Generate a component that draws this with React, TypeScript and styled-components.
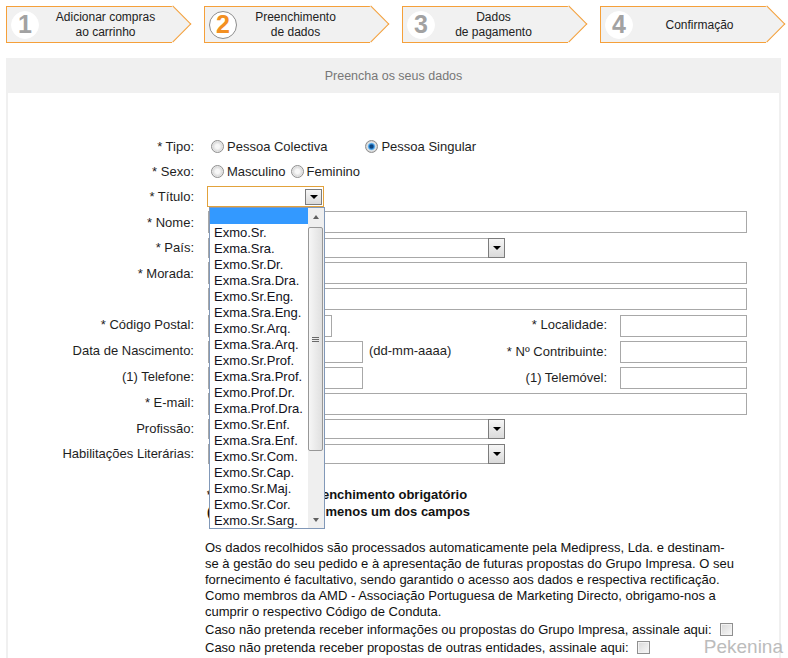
import styled, { createGlobalStyle } from 'styled-components';

const GlobalStyle = createGlobalStyle`
  html, body {
    margin: 0;
    padding: 0;
    background: #fff;
  }
  body {
    font-family: "Liberation Sans", Arial, sans-serif;
    font-size: 13px;
    color: #1e1e1e;
  }
`;

const ORANGE = '#f5a03a';

const Page = styled.div`
  position: relative;
  width: 788px;
  height: 658px;
  overflow: hidden;
  box-sizing: border-box;
  padding: 6px 0 0 6px;
`;

/* ---------- checkout steps ---------- */

const Steps = styled.ol`
  display: flex;
  gap: 32px;
  margin: 0;
  padding: 0;
  list-style: none;
`;

const Step = styled.li`
  position: relative;
  z-index: 0;
  display: flex;
  align-items: center;
  width: 166px;
  height: 37px;
  box-sizing: border-box;
  border: 1px solid ${ORANGE};
  border-right: none;
  background: #f1f1f1;

  &::after {
    content: '';
    position: absolute;
    z-index: -1;
    top: 4px;
    right: -13.5px;
    width: 25px;
    height: 25px;
    border-top: 1px solid ${ORANGE};
    border-right: 1px solid ${ORANGE};
    background: #f1f1f1;
    transform: rotate(45deg);
  }
`;

const StepNum = styled.span<{ $current?: boolean }>`
  flex: none;
  display: flex;
  align-items: center;
  justify-content: center;
  width: 28px;
  height: 28px;
  margin-left: 4px;
  box-sizing: border-box;
  border-radius: 50%;
  background: #fff;
  border: 1px solid ${(p) => (p.$current ? '#8c8c8c' : '#fff')};
  color: ${(p) => (p.$current ? '#f39022' : '#a2a2a2')};
  font-size: 25px;
  font-weight: bold;
  line-height: 1;
`;

const StepText = styled.span<{ $pad: number }>`
  flex: 1;
  padding-right: ${(p) => p.$pad}px;
  padding-top: 1px;
  text-align: center;
  font-size: 12px;
  line-height: 15px;
  color: #222;
`;

/* ---------- panel ---------- */

const Panel = styled.section`
  width: 775px;
  margin-top: 15px;
`;

const PanelHead = styled.div`
  display: flex;
  align-items: center;
  justify-content: center;
  height: 35px;
  background: #f0f0f0;
  color: #777;
  font-size: 12.5px;
`;

const PanelBody = styled.div`
  height: 580px;
  padding-top: 41px;
  box-sizing: border-box;
  border-left: 2px solid #f0f0f0;
  border-right: 2px solid #f0f0f0;
`;

const Row = styled.div<{ $h: number }>`
  display: flex;
  align-items: center;
  height: ${(p) => p.$h}px;
`;

const Label = styled.span<{ $lift?: number }>`
  flex: none;
  width: 186px;
  margin-right: 14px;
  margin-bottom: ${(p) => (p.$lift ?? 0) * 2}px;
  text-align: right;
  white-space: nowrap;
`;

const Field = styled.div`
  display: flex;
  align-items: center;
  width: 539px;
`;

const SideLabel = styled.span<{ $lift?: number }>`
  flex: 1;
  margin-right: 13px;
  margin-bottom: ${(p) => (p.$lift ?? 0) * 2}px;
  text-align: right;
  white-space: nowrap;
`;

const Hint = styled.span`
  align-self: flex-start;
  margin: 2px 0 0 6px;
`;

const Dash = styled.span`
  margin: 0 6px;
`;

const Input = styled.input<{ $w: number }>`
  width: ${(p) => p.$w}px;
  height: 22px;
  box-sizing: border-box;
  margin: 0;
  padding: 0 3px;
  border: 1px solid #a8a8a8;
  background: #fff;
  font: inherit;
`;

/* radios */

const Choice = styled.label<{ $gap: number }>`
  display: inline-flex;
  align-items: center;
  gap: 3px;
  margin-left: ${(p) => p.$gap}px;
`;

const Radio = styled.span<{ $on?: boolean }>`
  width: 13px;
  height: 13px;
  box-sizing: border-box;
  border-radius: 50%;
  border: 1px solid #8e8e8e;
  background: ${(p) =>
    p.$on
      ? 'radial-gradient(circle, #0b4580 0 1.5px, #2f86d4 2.5px, #86c6f2 3.5px, #e6e6e6 4.2px, #cfcfcf 5.5px)'
      : 'radial-gradient(circle, #f7f7f7 0 2px, #dcdcdc 4.5px, #efefef 5.5px)'};
`;

/* selects */

const SelectBox = styled.div<{ $w: number; $h: number; $focus?: boolean }>`
  position: relative;
  display: flex;
  justify-content: flex-end;
  width: ${(p) => p.$w}px;
  height: ${(p) => p.$h}px;
  box-sizing: border-box;
  margin-left: ${(p) => (p.$focus ? -1 : 0)}px;
  padding: ${(p) => (p.$focus ? '2px 1px 1px 0' : '0')};
  border: 1px solid ${(p) => (p.$focus ? '#e2a23c' : '#a8a8a8')};
  background: #fff;
`;

const SelectBtn = styled.span<{ $inset?: boolean }>`
  display: flex;
  align-items: center;
  justify-content: center;
  width: 17px;
  box-sizing: border-box;
  margin: ${(p) => (p.$inset ? '0' : '-1px -1px -1px 0')};
  border: 1px solid #7c7c7c;
  background: linear-gradient(#f6f6f6, #dadada);
`;

const DownTri = styled.span`
  width: 0;
  height: 0;
  border-left: 4px solid transparent;
  border-right: 4px solid transparent;
  border-top: 4px solid #000;
`;

/* open list of the Título select */

const Listbox = styled.div`
  position: absolute;
  z-index: 5;
  top: calc(100% + 1px);
  left: 1px;
  display: flex;
  width: 116px;
  height: 322px;
  box-sizing: border-box;
  border: 1px solid #8198b8;
  background: #fff;
`;

const Options = styled.ul`
  flex: 1;
  margin: 0;
  padding: 0;
  list-style: none;
`;

const Option = styled.li<{ $sel?: boolean }>`
  height: 16px;
  box-sizing: border-box;
  padding: 1px 0 0 4px;
  line-height: 16px;
  white-space: nowrap;
  color: #101020;
  background: ${(p) => (p.$sel ? '#3399ff' : 'transparent')};
`;

const Scrollbar = styled.div`
  display: flex;
  flex-direction: column;
  width: 16px;
  background: #efefef;
`;

const ScrollBtn = styled.span`
  display: flex;
  align-items: center;
  justify-content: center;
  height: 17px;
`;

const ScrollTri = styled.span<{ $up?: boolean }>`
  width: 0;
  height: 0;
  border-left: 3.5px solid transparent;
  border-right: 3.5px solid transparent;
  ${(p) => (p.$up ? 'border-bottom: 4px solid #606060;' : 'border-top: 4px solid #606060;')}
`;

const Track = styled.div`
  flex: 1;
  padding-top: 2px;
`;

const Thumb = styled.div`
  display: flex;
  align-items: center;
  justify-content: center;
  width: 15px;
  height: 224px;
  box-sizing: border-box;
  border: 1px solid #979797;
  border-radius: 2px;
  background: linear-gradient(to right, #f6f6f6, #e0e0e0);
`;

const Grip = styled.span`
  width: 7px;
  height: 5px;
  background: repeating-linear-gradient(#6a6a6a 0 1px, transparent 1px 2px);
`;

/* legend and notes */

const Legend = styled.div`
  margin: 20px 0 0 199px;
  font-weight: bold;
  line-height: 17px;
  color: #111;
`;

const LegendLine = styled.div`
  display: flex;
`;

const Mark = styled.span`
  flex: none;
  width: 21px;
`;

const Note = styled.p`
  width: 531px;
  margin: 20px 0 0 197px;
  line-height: 16px;
  color: #111;
`;

const Consent = styled.label`
  display: flex;
  align-items: center;
  height: 18px;
  margin-left: 197px;
  white-space: nowrap;
  color: #111;
`;

const Check = styled.span`
  width: 13px;
  height: 13px;
  box-sizing: border-box;
  margin-left: 8px;
  border: 1px solid #8f8f8f;
  background: linear-gradient(135deg, #d8d8d8, #f8f8f8);
  box-shadow: inset 0 0 0 1px #f2f2f2;
`;

const Watermark = styled.span`
  position: absolute;
  right: 5px;
  bottom: 0px;
  font-size: 19px;
  line-height: 22px;
  color: #bcbcbc;
`;

const steps = [
  { n: 1, lines: ['Adicionar compras', 'ao carrinho'], pad: 0 },
  { n: 2, lines: ['Preenchimento', 'de dados'], pad: 16, current: true },
  { n: 3, lines: ['Dados', 'de pagamento'], pad: 16 },
  { n: 4, lines: ['Confirmação'], pad: 0 },
];

const titles = [
  '',
  'Exmo.Sr.',
  'Exma.Sra.',
  'Exmo.Sr.Dr.',
  'Exma.Sra.Dra.',
  'Exmo.Sr.Eng.',
  'Exma.Sra.Eng.',
  'Exmo.Sr.Arq.',
  'Exma.Sra.Arq.',
  'Exmo.Sr.Prof.',
  'Exma.Sra.Prof.',
  'Exmo.Prof.Dr.',
  'Exma.Prof.Dra.',
  'Exmo.Sr.Enf.',
  'Exma.Sra.Enf.',
  'Exmo.Sr.Com.',
  'Exmo.Sr.Cap.',
  'Exmo.Sr.Maj.',
  'Exmo.Sr.Cor.',
  'Exmo.Sr.Sarg.',
];

const Select = ({ w, h = 20 }: { w: number; h?: number }) => (
  <SelectBox $w={w} $h={h}>
    <SelectBtn>
      <DownTri />
    </SelectBtn>
  </SelectBox>
);

export default function App() {
  return (
    <Page>
      <GlobalStyle />
      <Steps>
        {steps.map((s) => (
          <Step key={s.n}>
            <StepNum $current={s.current}>{s.n}</StepNum>
            <StepText $pad={s.pad}>
              {s.lines.map((l) => (
                <div key={l}>{l}</div>
              ))}
            </StepText>
          </Step>
        ))}
      </Steps>

      <Panel>
        <PanelHead>Preencha os seus dados</PanelHead>
        <PanelBody>
          <Row $h={25}>
            <Label>* Tipo:</Label>
            <Choice $gap={3}>
              <Radio />
              Pessoa Colectiva
            </Choice>
            <Choice $gap={38}>
              <Radio $on />
              Pessoa Singular
            </Choice>
          </Row>
          <Row $h={25}>
            <Label>* Sexo:</Label>
            <Choice $gap={3}>
              <Radio />
              Masculino
            </Choice>
            <Choice $gap={5}>
              <Radio />
              Feminino
            </Choice>
          </Row>
          <Row $h={25}>
            <Label>* Título:</Label>
            <SelectBox $w={117} $h={21} $focus>
              <SelectBtn $inset>
                <DownTri />
              </SelectBtn>
              <Listbox>
                <Options>
                  {titles.map((t, i) => (
                    <Option key={i} $sel={i === 0}>
                      {t}
                    </Option>
                  ))}
                </Options>
                <Scrollbar>
                  <ScrollBtn>
                    <ScrollTri $up />
                  </ScrollBtn>
                  <Track>
                    <Thumb>
                      <Grip />
                    </Thumb>
                  </Track>
                  <ScrollBtn>
                    <ScrollTri />
                  </ScrollBtn>
                </Scrollbar>
              </Listbox>
            </SelectBox>
          </Row>
          <Row $h={26}>
            <Label>* Nome:</Label>
            <Input $w={539} readOnly />
          </Row>
          <Row $h={25}>
            <Label>* País:</Label>
            <Select w={297} />
          </Row>
          <Row $h={26}>
            <Label>* Morada:</Label>
            <Input $w={539} readOnly />
          </Row>
          <Row $h={26}>
            <Label />
            <Input $w={539} readOnly />
          </Row>
          <Row $h={27}>
            <Label $lift={1}>* Código Postal:</Label>
            <Field>
              <Input $w={52} readOnly />
              <Dash>-</Dash>
              <Input $w={56} readOnly />
              <SideLabel $lift={1}>* Localidade:</SideLabel>
              <Input $w={127} readOnly />
            </Field>
          </Row>
          <Row $h={26}>
            <Label $lift={2}>Data de Nascimento:</Label>
            <Field>
              <Input $w={155} readOnly />
              <Hint>(dd-mm-aaaa)</Hint>
              <SideLabel $lift={1}>* Nº Contribuinte:</SideLabel>
              <Input $w={127} readOnly />
            </Field>
          </Row>
          <Row $h={26}>
            <Label $lift={2}>(1) Telefone:</Label>
            <Field>
              <Input $w={155} readOnly />
              <SideLabel $lift={1}>(1) Telemóvel:</SideLabel>
              <Input $w={127} readOnly />
            </Field>
          </Row>
          <Row $h={25}>
            <Label $lift={1}>* E-mail:</Label>
            <Input $w={539} readOnly />
          </Row>
          <Row $h={25}>
            <Label>Profissão:</Label>
            <Select w={297} />
          </Row>
          <Row $h={25}>
            <Label>Habilitações Literárias:</Label>
            <Select w={297} />
          </Row>

          <Legend>
            <LegendLine>
              <Mark>*</Mark>
              Campos de preenchimento obrigatório
            </LegendLine>
            <LegendLine>
              <Mark>(1)</Mark>
              Preencher pelo menos um dos campos
            </LegendLine>
          </Legend>

          <Note>
            Os dados recolhidos são processados automaticamente pela Medipress, Lda. e destinam-se à
            gestão do seu pedido e à apresentação de futuras propostas do Grupo Impresa. O seu
            fornecimento é facultativo, sendo garantido o acesso aos dados e respectiva rectificação.
            Como membros da AMD - Associação Portuguesa de Marketing Directo, obrigamo-nos a cumprir
            o respectivo Código de Conduta.
          </Note>
          <Consent>
            Caso não pretenda receber informações ou propostas do Grupo Impresa, assinale aqui:
            <Check />
          </Consent>
          <Consent>
            Caso não pretenda receber propostas de outras entidades, assinale aqui:
            <Check />
          </Consent>
        </PanelBody>
      </Panel>
      <Watermark>Pekenina</Watermark>
    </Page>
  );
}
